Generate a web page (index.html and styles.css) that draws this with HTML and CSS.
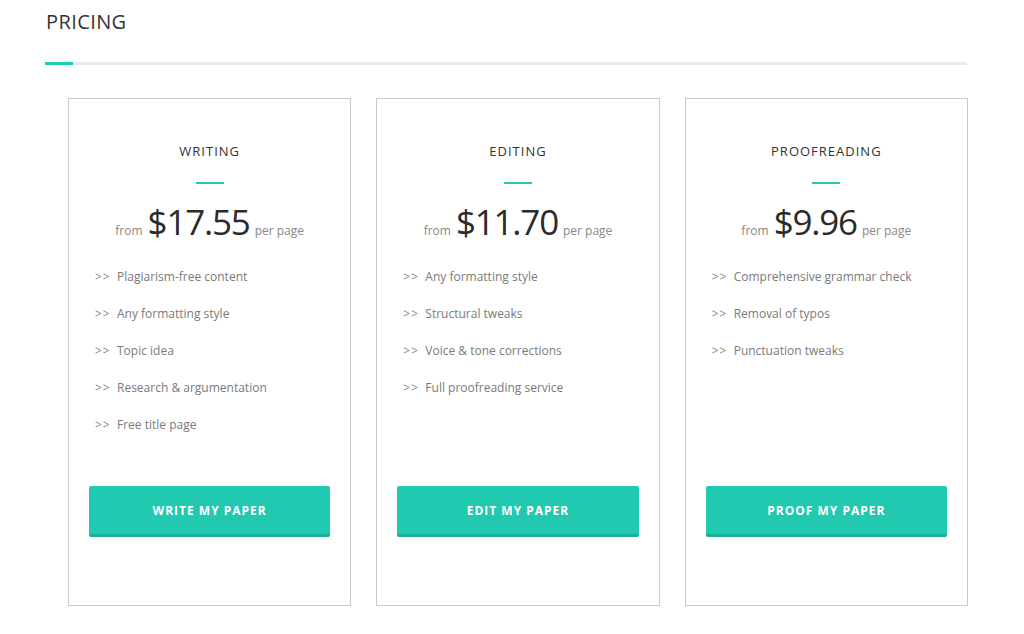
FILE: index.html
```html
<!DOCTYPE html>
<html>
<head>
<meta charset="utf-8">
<link rel="stylesheet" href="styles.css">
</head>
<body>
<div class="page">
  <h1 class="heading">PRICING</h1>
  <div class="bar"><div class="bar-fill"></div></div>
  <div class="cards">
    <div class="card">
      <div class="card-title">WRITING</div>
      <div class="accent"></div>
      <div class="price"><span class="small">from</span><span class="amount">$17.55</span><span class="small">per page</span></div>
      <ul class="features">
        <li><span class="arrow">&gt;&gt;</span>Plagiarism-free content</li>
        <li><span class="arrow">&gt;&gt;</span>Any formatting style</li>
        <li><span class="arrow">&gt;&gt;</span>Topic idea</li>
        <li><span class="arrow">&gt;&gt;</span>Research &amp; argumentation</li>
        <li><span class="arrow">&gt;&gt;</span>Free title page</li>
      </ul>
      <a class="btn" href="#">WRITE MY PAPER</a>
    </div>
    <div class="card">
      <div class="card-title">EDITING</div>
      <div class="accent"></div>
      <div class="price"><span class="small">from</span><span class="amount">$11.70</span><span class="small">per page</span></div>
      <ul class="features">
        <li><span class="arrow">&gt;&gt;</span>Any formatting style</li>
        <li><span class="arrow">&gt;&gt;</span>Structural tweaks</li>
        <li><span class="arrow">&gt;&gt;</span>Voice &amp; tone corrections</li>
        <li><span class="arrow">&gt;&gt;</span>Full proofreading service</li>
      </ul>
      <a class="btn" href="#">EDIT MY PAPER</a>
    </div>
    <div class="card">
      <div class="card-title">PROOFREADING</div>
      <div class="accent"></div>
      <div class="price"><span class="small">from</span><span class="amount">$9.96</span><span class="small">per page</span></div>
      <ul class="features">
        <li><span class="arrow">&gt;&gt;</span>Comprehensive grammar check</li>
        <li><span class="arrow">&gt;&gt;</span>Removal of typos</li>
        <li><span class="arrow">&gt;&gt;</span>Punctuation tweaks</li>
      </ul>
      <a class="btn" href="#">PROOF MY PAPER</a>
    </div>
  </div>
</div>
</body>
</html>
```
FILE: styles.css
```css
html, body {
  margin: 0;
  padding: 0;
  background: #fff;
  font-family: "Open Sans", "Noto Sans", sans-serif;
}
.page {
  width: 923px;
  margin-left: 45px;
  padding-top: 10px;
}
.heading {
  margin: 0 0 0 1px;
  font-size: 20px;
  line-height: 24px;
  font-weight: 400;
  color: #333;
  letter-spacing: 0.4px;
}
.bar {
  margin-top: 28px;
  width: 922px;
  height: 3px;
  background: #e8eaed;
}
.bar-fill {
  width: 28px;
  height: 3px;
  background: #20c9b0;
}
.cards {
  display: flex;
  gap: 25px;
  width: 900px;
  margin-top: 33px;
  margin-left: 23px;
}
.card {
  flex: 1;
  box-sizing: border-box;
  height: 508px;
  border: 1px solid #c9c9c9;
  padding: 0 20px;
  display: flex;
  flex-direction: column;
  align-items: center;
}
.card-title {
  margin-top: 43px;
  font-size: 13px;
  line-height: 18px;
  color: #333;
  letter-spacing: 1px;
}
.accent {
  margin-top: 22px;
  width: 28px;
  height: 2px;
  background: #20c9b0;
}
.price {
  margin-top: 16px;
  display: flex;
  align-items: baseline;
  gap: 5px;
}
.small {
  font-size: 12px;
  color: #888;
}
.amount {
  font-size: 35px;
  line-height: 43px;
  color: #2b2b2b;
  letter-spacing: -1.2px;
}
.features {
  list-style: none;
  margin: 15px 0 0 0;
  padding: 0 0 0 6px;
  align-self: stretch;
  flex: 1;
}
.features li {
  font-size: 12px;
  line-height: 37px;
  color: #7a7a7a;
}
.arrow {
  display: inline-block;
  width: 22px;
  color: #888;
  letter-spacing: 1px;
}
.btn {
  align-self: stretch;
  height: 51px;
  margin-bottom: 68px;
  background: #20c9b0;
  border-bottom: 3px solid #19ae97;
  border-radius: 2px;
  color: #fff;
  text-decoration: none;
  font-size: 12px;
  font-weight: 700;
  letter-spacing: 1px;
  display: flex;
  align-items: center;
  justify-content: center;
  box-sizing: border-box;
}
```
